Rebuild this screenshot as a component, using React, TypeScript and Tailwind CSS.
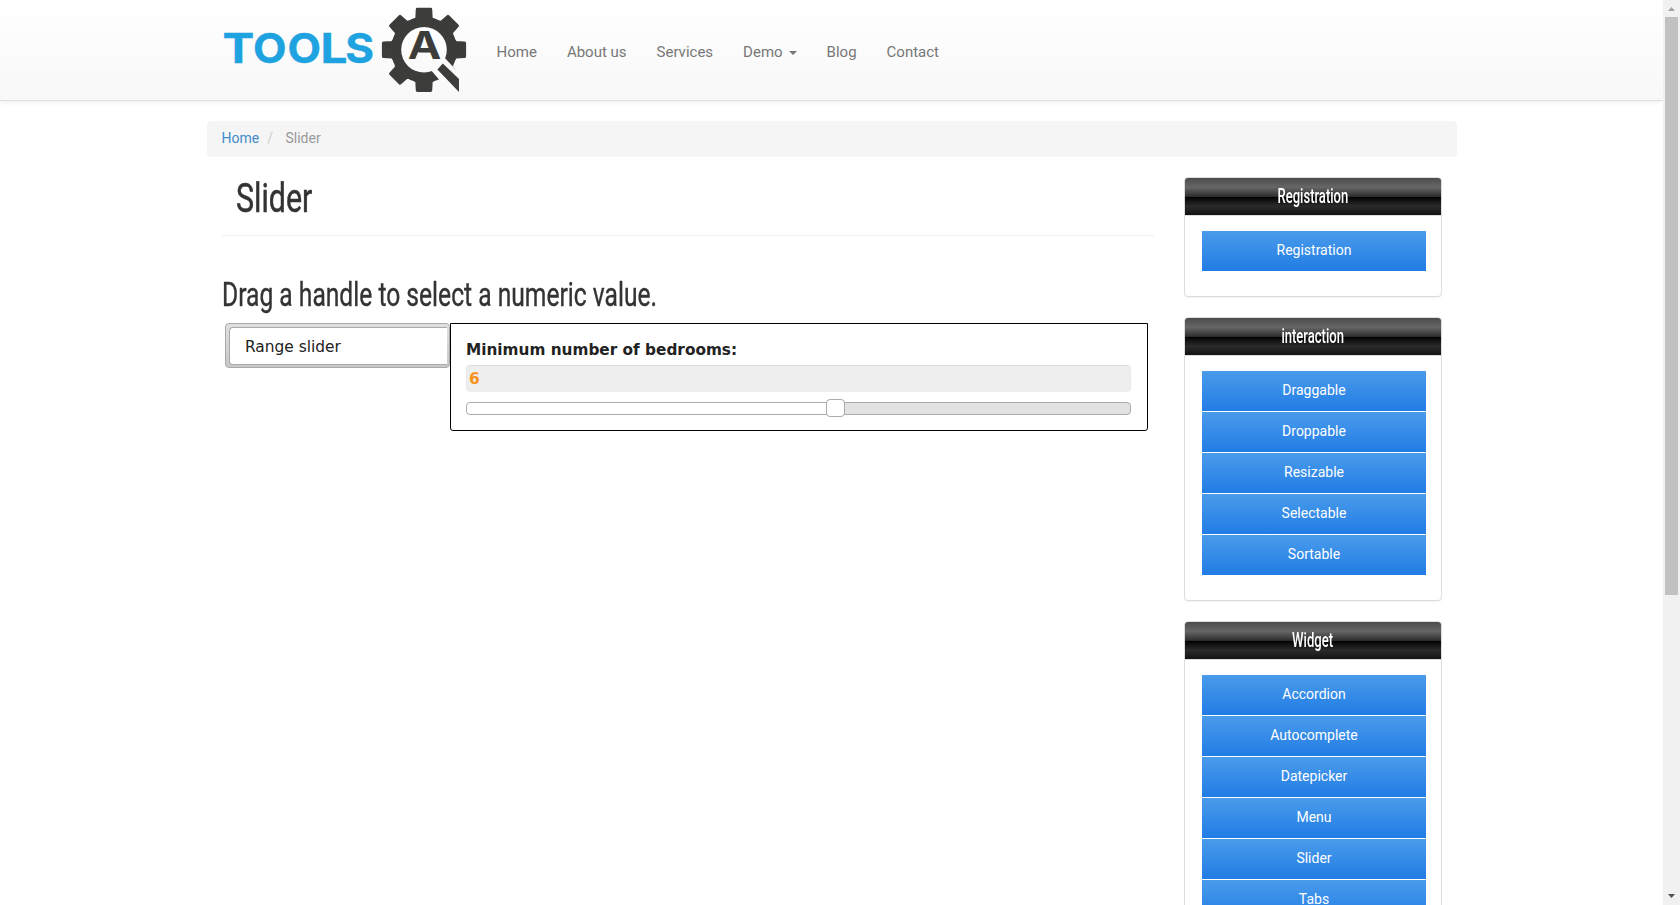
import React from "react";

const NAV_FONT = "font-[Roboto,'Liberation_Sans',sans-serif]";

const LOGO_LETTERS = [
  { char: "T", x: 222.6, width: 31.8 },
  { char: "O", x: 253, width: 33.5 },
  { char: "O", x: 287.4, width: 33.5 },
  { char: "L", x: 320.6, width: 27 },
  { char: "S", x: 345.2, width: 28.8 },
];

function Logo() {
  return (
    <svg width="252" height="100" viewBox="222 0 252 100" className="block shrink-0">
      <defs>
        <mask id="gear-cut">
          <rect x="370" y="0" width="110" height="100" fill="#fff" />
          <circle cx="424" cy="49.8" r="22.8" fill="#000" />
          <polygon points="443,56 454,67.7 470,82 462,97 439.7,80.3 430,69" fill="#000" />
        </mask>
      </defs>
      {LOGO_LETTERS.map((l) => (
        <text
          key={l.x}
          x={l.x}
          y="63.4"
          fontSize="41"
          textLength={l.width}
          lengthAdjust="spacingAndGlyphs"
          fill="#1ea2e0"
          stroke="#1ea2e0"
          strokeWidth="0.4"
          className="font-[Inter,sans-serif] font-bold"
        >
          {l.char}
        </text>
      ))}
      <g mask="url(#gear-cut)" fill="#3c3c3b" stroke="#3c3c3b" strokeWidth="3" strokeLinejoin="round">
        <circle cx="424" cy="49.8" r="31.5" />
        {[0, 45, 90, 135, 180, 225, 270, 315].map((a) => (
          <polygon key={a} points="417.3,9.2 430.7,9.2 431.2,18 437,23 411,23 416.8,18" transform={`rotate(${a} 424 49.8)`} />
        ))}
      </g>
      <polygon points="442.8,63.6 459,79 459,92 437.4,69.6" fill="#3c3c3b" />
      <text x="407.7" y="59.2" fontSize="38.5" textLength="33.6" lengthAdjust="spacingAndGlyphs" fill="#3c3c3b" className="font-[Inter,sans-serif] font-bold">
        A
      </text>
      <path d="M415.5 60 L418.8 52.4" stroke="#fbfbfb" strokeWidth="1.4" />
    </svg>
  );
}

function Panel({ title, items }: { title: string; items: string[] }) {
  return (
    <section className="mb-5 rounded border border-[#ddd] bg-white pb-[25px] shadow-[0_1px_1px_rgba(0,0,0,0.05)]">
      <h3 className="flex h-[38px] items-center justify-center rounded-t-[3px] border-b border-[#ddd] bg-[linear-gradient(to_bottom,#4c4c4c_0%,#595959_12%,#666666_25%,#474747_39%,#2c2c2c_50%,#000000_51%,#111111_60%,#2b2b2b_76%,#1c1c1c_91%,#131313_100%)] pt-px text-[19.5px] font-medium text-white">
        <span className="inline-block scale-x-[0.67] whitespace-nowrap">{title}</span>
      </h3>
      <ul className="ml-[17px] mt-[15px] flex w-56 flex-col gap-px">
        {items.map((item) => (
          <li key={item} className="flex h-10 items-center justify-center bg-linear-to-b from-[#499bea] to-[#207ce5] pb-0.5 text-sm text-white">
            {item}
          </li>
        ))}
      </ul>
    </section>
  );
}

export default function App() {
  return (
    <div className={`flex h-[905px] w-[1680px] overflow-hidden bg-white text-[#333] ${NAV_FONT}`}>
      <div className="h-[905px] w-[1663px] overflow-hidden">
        <header className="flex h-[101px] border-b border-[#e0e0e0] bg-linear-to-b from-white to-[#f8f8f8] pl-[222px] shadow-[0_1px_5px_rgba(0,0,0,0.075)]">
          <Logo />
          <nav className="ml-[22.5px] flex h-[104px] items-center gap-[30px] text-[15px] text-[#777]">
            <a>Home</a>
            <a>About us</a>
            <a>Services</a>
            <a className="flex items-center">
              Demo
              <span className="ml-1.5 mt-0.5 border-x-4 border-t-4 border-x-transparent border-t-[#777]" />
            </a>
            <a>Blog</a>
            <a>Contact</a>
          </nav>
        </header>

        <div className="ml-[207px] mt-5 w-[1250px]">
          <div className="flex h-9 items-center rounded bg-[#f5f5f5] pb-0.5 pl-[14.5px] text-sm">
            <a className="text-[#428bca]">Home</a>
            <span className="ml-2 text-[#ccc]">/</span>
            <span className="ml-[12.5px] text-[#999]">Slider</span>
          </div>

          <div className="flex">
            <main className="ml-[15px] w-[932px]">
              <h1 className="flex h-[79px] items-start border-b border-[#eee] pl-[14px] pt-[18px] text-[40px] leading-[47px]">
                <span className="inline-block origin-left scale-x-[0.76] [-webkit-text-stroke:0.5px_#333]">Slider</span>
              </h1>
              <h2 className="mt-[38px] h-[49px] whitespace-nowrap text-[34px] leading-[40px]">
                <span className="inline-block origin-left scale-x-[0.724] [-webkit-text-stroke:0.4px_#333]">Drag a handle to select a numeric value.</span>
              </h2>

              <div className="ml-[3px] flex items-start font-['DejaVu_Sans',Verdana,sans-serif] text-[15.4px] text-[#222]">
                <div className="h-[45px] w-[225px] rounded border border-[#aaa] bg-linear-to-b from-[#e0e0e0] to-[#c8c8c8] py-[3px] pl-[3px] pr-0.5">
                  <div className="flex h-[38px] items-center rounded-l border border-r-0 border-[#aaa] bg-white pl-[15px] pt-[3px]">
                    <span>Range slider</span>
                  </div>
                </div>
                <div className="h-[108px] w-[698px] rounded-b-[3px] border border-black bg-white px-[15px] pt-4">
                  <label className="block h-[25px] whitespace-nowrap pt-px text-[15.3px] font-bold leading-[18px]">Minimum number of bedrooms:</label>
                  <div className="flex h-[27px] w-[665px] items-center rounded border border-x-[#e8e8e8] border-b-[#eee] border-t-[#ddd] bg-[#eee] pl-0.5 pt-0.5 font-bold text-[#f6931f]">6</div>
                  <div className="relative mt-2.5 h-[13px] w-[665px] overflow-visible rounded border border-[#aaa] bg-[#e2e2e2]">
                    <div className="h-full w-[370px] rounded-l bg-white" />
                    <div className="absolute -top-1 left-[359px] h-[18px] w-[19px] rounded border border-[#aaa] bg-white" />
                  </div>
                </div>
              </div>
            </main>

            <aside className="ml-[30px] mt-5 w-[258px]">
              <Panel title="Registration" items={["Registration"]} />
              <Panel title="interaction" items={["Draggable", "Droppable", "Resizable", "Selectable", "Sortable"]} />
              <Panel title="Widget" items={["Accordion", "Autocomplete", "Datepicker", "Menu", "Slider", "Tabs"]} />
            </aside>
          </div>
        </div>
      </div>

      <div className="flex h-[905px] w-[17px] flex-col items-center bg-[#f1f1f1]">
        <svg width="17" height="17" viewBox="0 0 17 17" className="shrink-0">
          <path d="M5 11 L8.5 7 L12 11 Z" fill="#a3a3a3" />
        </svg>
        <div className="h-[578px] w-[13px] bg-[#c1c1c1]" />
        <svg width="17" height="17" viewBox="0 0 17 17" className="mt-auto shrink-0">
          <path d="M5 6 L12 6 L8.5 10 Z" fill="#505050" />
        </svg>
      </div>
    </div>
  );
}
